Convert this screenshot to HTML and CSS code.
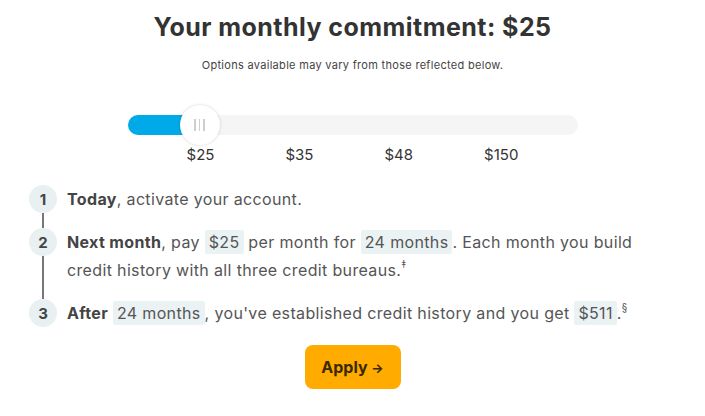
FILE: index.html
```html
<!DOCTYPE html>
<html>
<head>
<meta charset="utf-8">
<link rel="stylesheet" href="styles.css">
</head>
<body>
<main class="page">
  <h1 class="title">Your monthly commitment: $25</h1>
  <p class="subtitle">Options available may vary from those reflected below.</p>

  <div class="slider">
    <div class="track">
      <div class="fill"></div>
      <div class="thumb"><span></span><span></span><span></span></div>
    </div>
    <div class="labels">
      <span>$25</span><span>$35</span><span>$48</span><span>$150</span>
    </div>
  </div>

  <ol class="steps">
    <li class="step">
      <div class="marker"><span class="num">1</span><span class="line"></span></div>
      <p class="text"><b>Today</b>, activate your account.</p>
    </li>
    <li class="step">
      <div class="marker"><span class="num">2</span><span class="line"></span></div>
      <p class="text"><span><b>Next month</b>, pay <span class="chip">$25</span> per month for <span class="chip">24 months</span>. Each month you build</span><br><span>credit history with all three credit bureaus.<sup>‡</sup></span></p>
    </li>
    <li class="step last">
      <div class="marker"><span class="num">3</span></div>
      <p class="text"><b>After</b> <span class="chip">24 months</span>, you've established credit history and you get <span class="chip">$511</span>.<sup>§</sup></p>
    </li>
  </ol>

  <div class="actions">
    <button class="apply">Apply <span class="arrow">→</span></button>
  </div>
</main>
</body>
</html>
```

FILE: styles.css
```css
* { box-sizing: border-box; }
html, body { margin: 0; padding: 0; background: #fff; }
body {
  font-family: Inter, "Noto Sans", sans-serif;
  color: #555;
  width: 705px;
}
.page {
  display: flex;
  flex-direction: column;
  padding: 10px 0 0;
}
.title {
  margin: 0;
  text-align: center;
  font-size: 25px;
  line-height: 34px;
  font-weight: 700;
  letter-spacing: 0.45px;
  color: #333;
}
.subtitle {
  margin: 14px 0 0;
  text-align: center;
  font-size: 11px;
  line-height: 14px;
  letter-spacing: 0.3px;
  color: #444;
}
.slider {
  margin: 43px auto 0;
  width: 450px;
}
.track {
  position: relative;
  height: 20px;
  border-radius: 10px;
  background: #f5f5f5;
}
.fill {
  width: 80px;
  height: 20px;
  border-radius: 10px;
  background: #00a9e8;
}
.thumb {
  position: absolute;
  left: 52px;
  top: -10px;
  width: 40px;
  height: 40px;
  border-radius: 50%;
  background: #fff;
  box-shadow: 0 0 3px rgba(0,0,0,0.18);
  display: flex;
  justify-content: center;
  align-items: center;
  gap: 3px;
}
.thumb span {
  width: 1.5px;
  height: 12px;
  background: #cfcfcf;
}
.labels {
  display: flex;
  justify-content: center;
  gap: 71px;
  margin-top: 10px;
  font-size: 15px;
  line-height: 20px;
  color: #333;
}
.steps {
  list-style: none;
  margin: 20px 0 0;
  padding: 0 0 0 29px;
  display: flex;
  flex-direction: column;
}
.step {
  display: flex;
  gap: 10px;
}
.marker {
  display: flex;
  flex-direction: column;
  align-items: center;
  width: 28px;
  flex: none;
}
.num {
  width: 28px;
  height: 28px;
  border-radius: 50%;
  background: #e9f0f2;
  display: flex;
  justify-content: center;
  align-items: center;
  font-size: 15px;
  font-weight: 700;
  color: #444;
}
.line {
  flex: 1;
  width: 2px;
  background: #777;
}
.text {
  margin: 0;
  padding: 0 0 15px;
  font-size: 16px;
  line-height: 28px;
  letter-spacing: 0.35px;
  width: 600px;
}
.step.last .text { padding-bottom: 0; }
.text b { color: #444; font-weight: 700; }
.chip {
  display: inline-block;
  background: #eaf2f4;
  padding: 0 4px;
  line-height: 24px;
  border-radius: 2px;
}
sup {
  font-size: 10px;
  line-height: 0;
  vertical-align: 8px;
}
.actions {
  display: flex;
  justify-content: center;
  margin-top: 18px;
}
.apply {
  width: 96px;
  height: 44px;
  border: none;
  border-radius: 8px;
  background: #ffab00;
  font-family: inherit;
  font-size: 16px;
  font-weight: 700;
  color: #3a2a00;
}
.arrow { font-size: 13px; }
```
